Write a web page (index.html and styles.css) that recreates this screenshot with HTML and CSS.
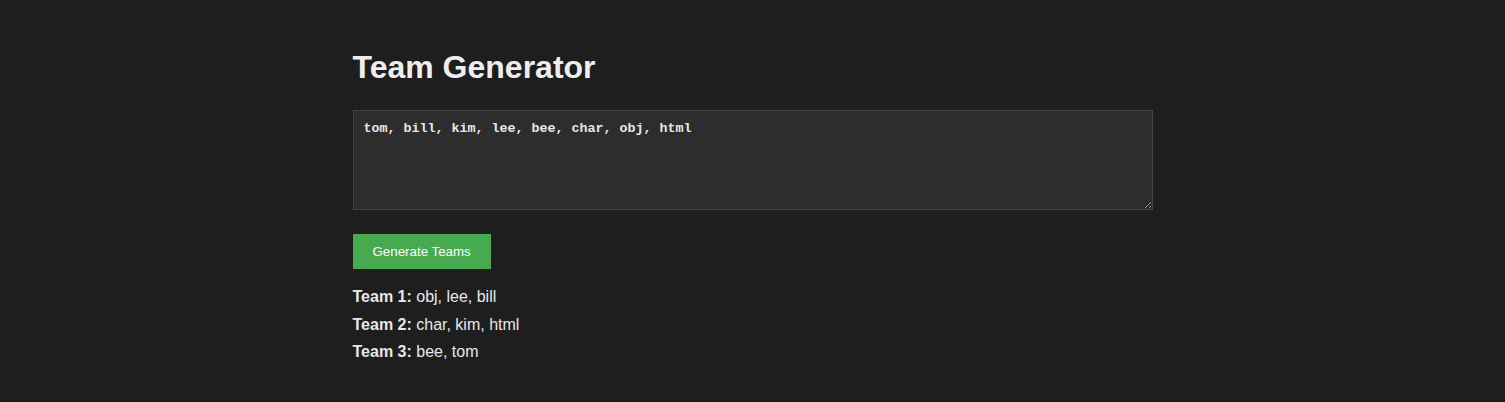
FILE: index.html
```html
<!DOCTYPE html>
<html>
<head>
<meta charset="utf-8">
<link rel="stylesheet" href="styles.css">
</head>
<body>
<div class="container">
  <h1 class="title">Team Generator</h1>
  <textarea class="names">tom, bill, kim, lee, bee, char, obj, html</textarea>
  <button class="generate">Generate Teams</button>
  <div class="results">
    <div class="team"><strong>Team 1:</strong> obj, lee, bill</div>
    <div class="team"><strong>Team 2:</strong> char, kim, html</div>
    <div class="team"><strong>Team 3:</strong> bee, tom</div>
  </div>
</div>
</body>
</html>
```
FILE: styles.css
```css
html, body {
  background: #1e1e1e;
}
body {
  margin: 0;
  padding: 28px 20px;
  color: #e8e8e8;
  font-family: "Liberation Sans", Arial, sans-serif;
}
.container {
  width: 800px;
  margin: 0 auto;
}
.title {
  font-size: 32px;
  font-weight: bold;
  margin: 21px 0 24px;
  line-height: 37px;
  color: #eeeeee;
}
.names {
  display: block;
  box-sizing: border-box;
  width: 800px;
  height: 100px;
  margin: 0;
  padding: 10px;
  background: #2d2d2d;
  border: 1px solid #444444;
  color: #e8e8e8;
  font-family: "Liberation Mono", "Courier New", monospace;
  font-weight: bold;
  font-size: 13.33px;
  line-height: 15px;
  resize: vertical;
}
.generate {
  display: block;
  margin-top: 24px;
  padding: 10px 20px;
  border: none;
  background: #46aa4f;
  color: #ffffff;
  font-family: "Liberation Sans", Arial, sans-serif;
  font-size: 13.33px;
  line-height: 15px;
  cursor: pointer;
}
.results {
  margin-top: 19px;
}
.team {
  font-size: 16px;
  line-height: 18px;
  margin-bottom: 9.5px;
}
.team strong {
  font-weight: bold;
}
```
